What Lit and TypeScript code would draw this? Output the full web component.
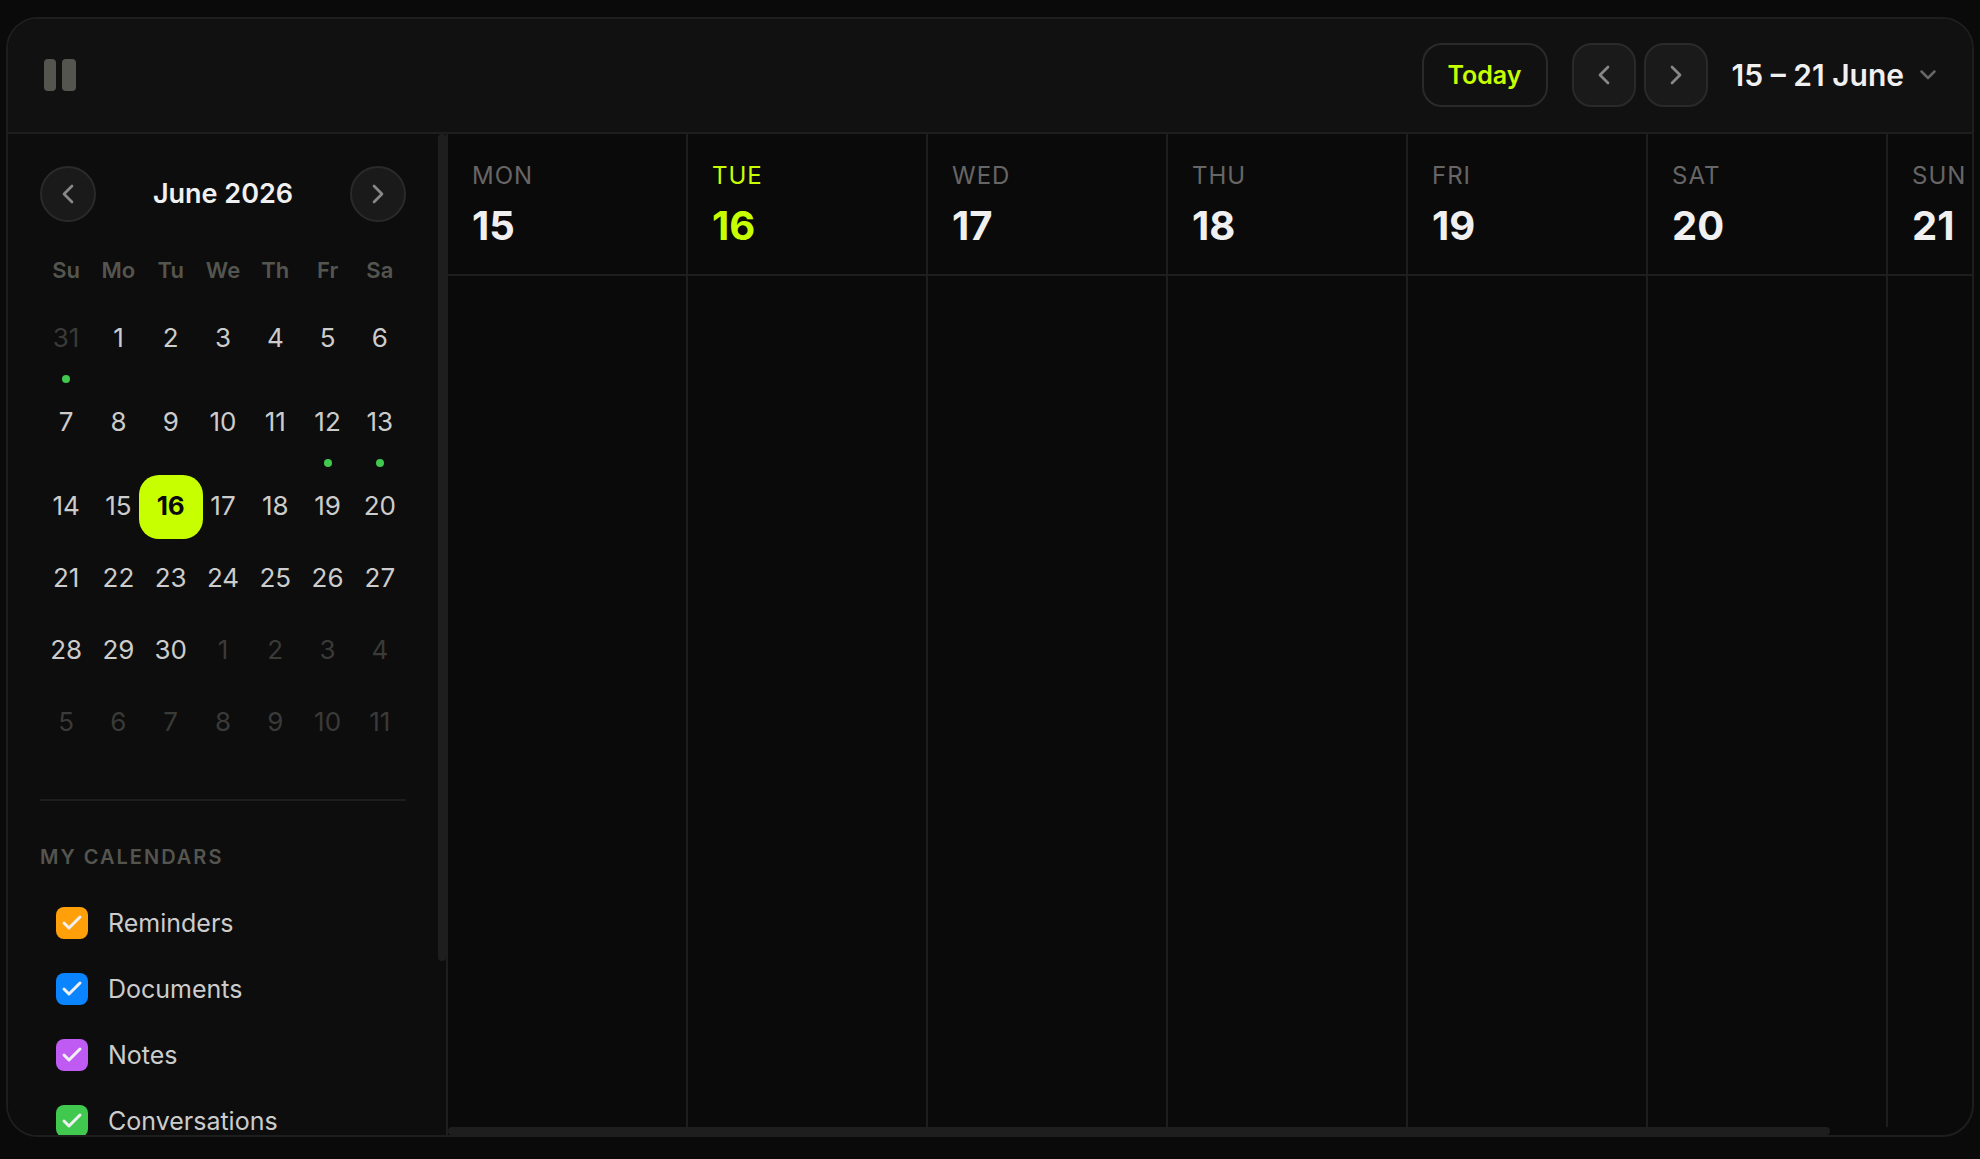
import { LitElement, html, css, svg } from "lit";
import { customElement, state } from "lit/decorators.js";
import { classMap } from "lit/directives/class-map.js";
import { styleMap } from "lit/directives/style-map.js";

interface Day {
  n: number;
  out?: boolean;
  dot?: boolean;
}

const range = (from: number, to: number, extra: Partial<Day> = {}): Day[] =>
  Array.from({ length: to - from + 1 }, (_, i) => ({ n: from + i, ...extra }));

const MONTH: Day[] = [
  { n: 31, out: true, dot: true },
  ...range(1, 11),
  { n: 12, dot: true },
  { n: 13, dot: true },
  ...range(14, 30),
  ...range(1, 11, { out: true }),
];

const WEEKDAYS = ["Su", "Mo", "Tu", "We", "Th", "Fr", "Sa"];

const WEEK = [
  { name: "MON", n: 15 },
  { name: "TUE", n: 16 },
  { name: "WED", n: 17 },
  { name: "THU", n: 18 },
  { name: "FRI", n: 19 },
  { name: "SAT", n: 20 },
  { name: "SUN", n: 21 },
];

const CALENDARS = [
  { name: "Reminders", color: "#ff9f0a" },
  { name: "Documents", color: "#0a84ff" },
  { name: "Notes", color: "#bf5af2" },
  { name: "Conversations", color: "#40c84f" },
];

const TODAY = 16;

const LEFT = svg`<path d="M15 6l-6 6 6 6" />`;
const RIGHT = svg`<path d="M9 6l6 6-6 6" />`;
const DOWN = svg`<path d="M5.5 8.5l6.5 6.5 6.5-6.5" />`;

const icon = (shape: unknown, cls: string) => html`
  <svg class="icon ${cls}" viewBox="0 0 24 24" aria-hidden="true">${shape}</svg>
`;

@customElement("mini-month")
export class MiniMonth extends LitElement {
  static styles = css`
    :host {
      display: block;
    }
    button {
      font: inherit;
      color: inherit;
      padding: 0;
      margin: 0;
      border: 0;
      background: none;
      cursor: pointer;
    }
    .head {
      display: flex;
      align-items: center;
      justify-content: space-between;
    }
    .title {
      margin: 0;
      font-size: 27px;
      line-height: 40px;
      font-weight: 600;
      color: #f0f0f0;
    }
    .round {
      display: grid;
      place-items: center;
      box-sizing: border-box;
      width: 56px;
      height: 56px;
      border: 2px solid #2a2a2a;
      border-radius: 50%;
      background: #1a1a1a;
      color: #888;
    }
    .icon {
      width: 32px;
      height: 32px;
      fill: none;
      stroke: currentColor;
      stroke-width: 2;
      stroke-linecap: round;
      stroke-linejoin: round;
    }
    .names,
    .days {
      display: grid;
      grid-template-columns: repeat(7, minmax(0, 1fr));
    }
    .names {
      margin-top: 32px;
      font-size: 22px;
      line-height: 32px;
      font-weight: 600;
      color: #555550;
      text-align: center;
    }
    .days {
      row-gap: 8px;
      margin-top: 21px;
      justify-items: center;
    }
    .slot {
      display: flex;
      flex-direction: column;
      align-items: center;
      gap: 4px;
      width: 64px;
    }
    .day {
      box-sizing: border-box;
      width: 64px;
      height: 64px;
      padding-bottom: 2px;
      border-radius: 20px;
      font-size: 26px;
      line-height: 32px;
      color: #ccc;
    }
    .day.out {
      color: #3a3a38;
    }
    .day.today {
      background: #c8ff00;
      color: #0a0a0a;
      font-weight: 700;
    }
    .dot {
      width: 8px;
      height: 8px;
      border-radius: 50%;
      background: #40c84f;
    }
  `;

  render() {
    return html`
      <div class="head">
        <button class="round" aria-label="Previous month">${icon(LEFT, "")}</button>
        <h2 class="title">June 2026</h2>
        <button class="round" aria-label="Next month">${icon(RIGHT, "")}</button>
      </div>
      <div class="names">${WEEKDAYS.map((d) => html`<span>${d}</span>`)}</div>
      <div class="days">
        ${MONTH.map(
          (d) => html`
            <div class="slot">
              <button class=${classMap({ day: true, out: !!d.out, today: !d.out && d.n === TODAY })}>${d.n}</button>
              ${d.dot ? html`<span class="dot"></span>` : null}
            </div>
          `
        )}
      </div>
    `;
  }
}

@customElement("calendar-list")
export class CalendarList extends LitElement {
  static styles = css`
    :host {
      display: block;
    }
    .title {
      margin: 0;
      font-size: 20px;
      line-height: 32px;
      font-weight: 600;
      letter-spacing: 2px;
      color: #555550;
    }
    .list {
      list-style: none;
      margin: 17px 0 0;
      padding: 0;
    }
    .row {
      display: flex;
      align-items: center;
      gap: 20px;
      height: 66px;
      padding: 0 16px;
      font-size: 25px;
      line-height: 32px;
      color: #ccc;
      cursor: pointer;
    }
    .box {
      display: grid;
      flex: none;
    }
    .input,
    .mark {
      grid-area: 1 / 1;
      width: 32px;
      height: 32px;
    }
    .input {
      appearance: none;
      margin: 0;
      border: 2px solid #333;
      border-radius: 8px;
    }
    .input:checked {
      border: 0;
      background: var(--tint);
    }
    .mark {
      fill: none;
      stroke: #f0f0f0;
      stroke-width: 3;
      stroke-linecap: round;
      stroke-linejoin: round;
      pointer-events: none;
      visibility: hidden;
    }
    .input:checked + .mark {
      visibility: visible;
    }
  `;

  render() {
    return html`
      <h3 class="title">MY CALENDARS</h3>
      <ul class="list">
        ${CALENDARS.map(
          (c) => html`
            <li>
              <label class="row">
                <span class="box">
                  <input class="input" type="checkbox" checked style=${styleMap({ "--tint": c.color })} />
                  <svg class="mark" viewBox="0 0 32 32" aria-hidden="true"><path d="M8 16l5 5L24 10" /></svg>
                </span>
                <span>${c.name}</span>
              </label>
            </li>
          `
        )}
      </ul>
    `;
  }
}

@customElement("app-root")
export class AppRoot extends LitElement {
  @state() private paused = false;

  static styles = css`
    :host {
      display: block;
      box-sizing: border-box;
      height: 100vh;
      padding: 17px 6px 22px;
      background: #0a0a0a;
      font-family: Inter, "Liberation Sans", sans-serif;
      color: #f0f0f0;
    }
    button {
      font: inherit;
      color: inherit;
      margin: 0;
      padding: 0;
      border: 0;
      background: none;
      cursor: pointer;
    }
    .panel {
      display: flex;
      flex-direction: column;
      box-sizing: border-box;
      height: 100%;
      border: 2px solid #1e1e1e;
      border-radius: 32px;
      overflow: hidden;
    }
    .bar {
      display: flex;
      align-items: center;
      justify-content: space-between;
      padding: 24px 32px 25px;
      border-bottom: 2px solid #1e1e1e;
      background: #111;
    }
    .pause {
      display: grid;
      place-items: center;
      width: 40px;
      height: 40px;
      color: #555550;
    }
    .pause-icon {
      width: 40px;
      height: 40px;
      fill: currentColor;
    }
    .actions {
      display: flex;
      align-items: center;
      gap: 24px;
    }
    .today {
      box-sizing: border-box;
      height: 64px;
      padding: 0 24px;
      border: 2px solid #2a2a2a;
      border-radius: 20px;
      font-size: 25px;
      line-height: 32px;
      font-weight: 600;
      color: #c8ff00;
    }
    .steps {
      display: flex;
      gap: 8px;
    }
    .step {
      display: grid;
      place-items: center;
      box-sizing: border-box;
      width: 64px;
      height: 64px;
      border: 2px solid #2a2a2a;
      border-radius: 20px;
      background: #1a1a1a;
      color: #888;
    }
    .range {
      display: flex;
      align-items: center;
      gap: 12px;
      font-size: 30px;
      line-height: 40px;
      font-weight: 600;
    }
    .icon {
      fill: none;
      stroke: currentColor;
      stroke-width: 2;
      stroke-linecap: round;
      stroke-linejoin: round;
    }
    .arrow {
      width: 32px;
      height: 32px;
    }
    .caret {
      width: 24px;
      height: 24px;
      stroke-width: 2.5;
      color: #666;
    }
    .body {
      display: flex;
      flex: 1;
      min-height: 0;
    }
    .side {
      display: flex;
      flex: none;
      width: 438px;
      border-right: 2px solid #1e1e1e;
      background: #0d0d0d;
    }
    .side-content {
      flex: 1;
      min-width: 0;
      padding: 32px 32px 0;
      overflow: hidden;
    }
    .list {
      margin-top: 44px;
      padding-top: 40px;
      border-top: 2px solid #1e1e1e;
    }
    .track-y {
      width: 8px;
    }
    .thumb-y,
    .thumb-x {
      border-radius: 4px;
      background: #1e1e1e;
    }
    .thumb-y {
      height: 82.6%;
    }
    .track-x {
      height: 8px;
    }
    .thumb-x {
      width: 90.7%;
      height: 8px;
    }
    .main {
      display: flex;
      flex: 1;
      flex-direction: column;
      min-width: 0;
    }
    .week {
      display: grid;
      flex: 1;
      grid-template-columns: repeat(7, 240px);
      min-height: 0;
      overflow: hidden;
    }
    .col {
      display: flex;
      flex-direction: column;
      border-right: 2px solid #1e1e1e;
    }
    .col-head {
      padding: 24px;
      border-bottom: 2px solid #1e1e1e;
    }
    .name {
      font-size: 24px;
      line-height: 36px;
      letter-spacing: 1px;
      color: #666;
    }
    .number {
      margin-top: 8px;
      font-size: 40px;
      line-height: 48px;
      font-weight: 700;
    }
    .current .name,
    .current .number {
      color: #c8ff00;
    }
  `;

  render() {
    return html`
      <div class="panel">
        <header class="bar">
          <button class="pause" aria-label="Toggle sidebar" aria-pressed=${this.paused} @click=${() => (this.paused = !this.paused)}>
            <svg class="pause-icon" viewBox="0 0 40 40" aria-hidden="true">
              <rect x="4" y="4" width="12" height="32" rx="4" />
              <rect x="22" y="4" width="14" height="32" rx="4" />
            </svg>
          </button>
          <div class="actions">
            <button class="today">Today</button>
            <div class="steps">
              <button class="step" aria-label="Previous week">${icon(LEFT, "arrow")}</button>
              <button class="step" aria-label="Next week">${icon(RIGHT, "arrow")}</button>
            </div>
            <button class="range" aria-haspopup="true">15 – 21 June ${icon(DOWN, "caret")}</button>
          </div>
        </header>
        <div class="body">
          <aside class="side">
            <div class="side-content">
              <mini-month></mini-month>
              <calendar-list class="list"></calendar-list>
            </div>
            <div class="track-y"><div class="thumb-y"></div></div>
          </aside>
          <main class="main">
            <div class="week">
              ${WEEK.map(
                (d) => html`
                  <section class=${classMap({ col: true, current: d.n === TODAY })}>
                    <div class="col-head">
                      <div class="name">${d.name}</div>
                      <div class="number">${d.n}</div>
                    </div>
                  </section>
                `
              )}
            </div>
            <div class="track-x"><div class="thumb-x"></div></div>
          </main>
        </div>
      </div>
    `;
  }
}
